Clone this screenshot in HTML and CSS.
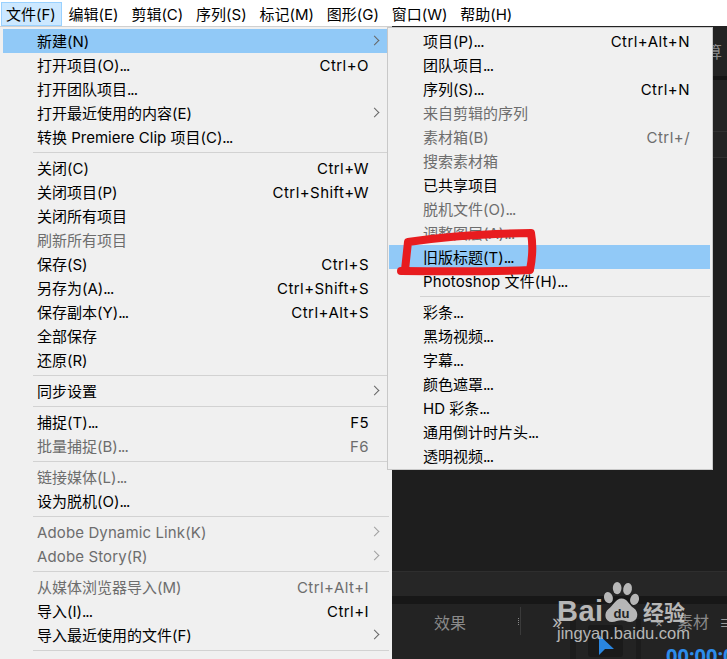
FILE: index.html
```html
<!DOCTYPE html>
<html lang="zh-CN">
<head>
<meta charset="utf-8">
<title>Premiere 文件菜单</title>
<link rel="stylesheet" href="styles.css">
</head>
<body>
<div class="menubar">
  <span class="top active">文件(F)</span>
  <span class="top">编辑(E)</span>
  <span class="top">剪辑(C)</span>
  <span class="top">序列(S)</span>
  <span class="top">标记(M)</span>
  <span class="top">图形(G)</span>
  <span class="top">窗口(W)</span>
  <span class="top">帮助(H)</span>
</div>
<div class="stage">
  <div class="menu file">
    <div class="item hot"><span>新建(N)</span><i class="arrow"></i></div>
    <div class="item"><span>打开项目(O)<span class="dots">...</span></span><kbd>Ctrl+O</kbd></div>
    <div class="item"><span>打开团队项目<span class="dots">...</span></span></div>
    <div class="item"><span>打开最近使用的内容(E)</span><i class="arrow"></i></div>
    <div class="item"><span>转换 Premiere Clip 项目(C)<span class="dots">...</span></span></div>
    <hr class="sep">
    <div class="item"><span>关闭(C)</span><kbd>Ctrl+W</kbd></div>
    <div class="item"><span>关闭项目(P)</span><kbd>Ctrl+Shift+W</kbd></div>
    <div class="item"><span>关闭所有项目</span></div>
    <div class="item off"><span>刷新所有项目</span></div>
    <div class="item"><span>保存(S)</span><kbd>Ctrl+S</kbd></div>
    <div class="item"><span>另存为(A)<span class="dots">...</span></span><kbd>Ctrl+Shift+S</kbd></div>
    <div class="item"><span>保存副本(Y)<span class="dots">...</span></span><kbd>Ctrl+Alt+S</kbd></div>
    <div class="item"><span>全部保存</span></div>
    <div class="item"><span>还原(R)</span></div>
    <hr class="sep">
    <div class="item"><span>同步设置</span><i class="arrow"></i></div>
    <hr class="sep">
    <div class="item"><span>捕捉(T)<span class="dots">...</span></span><kbd>F5</kbd></div>
    <div class="item off"><span>批量捕捉(B)<span class="dots">...</span></span><kbd>F6</kbd></div>
    <hr class="sep">
    <div class="item off"><span>链接媒体(L)<span class="dots">...</span></span></div>
    <div class="item"><span>设为脱机(O)<span class="dots">...</span></span></div>
    <hr class="sep">
    <div class="item off"><span class="wide">Adobe Dynamic Link(K)</span><i class="arrow"></i></div>
    <div class="item off"><span class="wide">Adobe Story(R)</span><i class="arrow"></i></div>
    <hr class="sep">
    <div class="item off"><span>从媒体浏览器导入(M)</span><kbd>Ctrl+Alt+I</kbd></div>
    <div class="item"><span>导入(I)<span class="dots">...</span></span><kbd>Ctrl+I</kbd></div>
    <div class="item"><span>导入最近使用的文件(F)</span><i class="arrow"></i></div>
    <hr class="sep">
  </div>
  <div class="dark">
    <div class="panel-head"><span class="cut">算</span></div>
    <div class="panel-gap"></div>
    <div class="panel-row tall"></div>
    <div class="panel-row short"></div>
    <div class="panel-body"></div>
    <div class="panel-foot"></div>
    <div class="panel-gap two"></div>
    <div class="tabs">
      <span class="tab fx">效果</span>
      <span class="grip"></span>
      <span class="more">»</span>
      <span class="tool-col">
        <span class="tool">
          <svg width="16" height="20" viewBox="0 0 16 20"><path fill="#2a86e0" d="M1 0 16 14 7 14 1 20z"/></svg>
        </span>
      </span>
      <span class="stack">
        <span class="tab-line"><span class="close">×</span><span class="tab">素材</span><span class="burger">≡</span></span>
        <span class="time">00:00:00</span>
      </span>
    </div>
  </div>

  <div class="menu sub">
    <div class="item"><span>项目(P)<span class="dots">...</span></span><kbd>Ctrl+Alt+N</kbd></div>
    <div class="item"><span>团队项目<span class="dots">...</span></span></div>
    <div class="item"><span>序列(S)<span class="dots">...</span></span><kbd>Ctrl+N</kbd></div>
    <div class="item off"><span>来自剪辑的序列</span></div>
    <div class="item off"><span>素材箱(B)</span><kbd>Ctrl+/</kbd></div>
    <div class="item off"><span>搜索素材箱</span></div>
    <div class="item"><span>已共享项目</span></div>
    <div class="item off"><span>脱机文件(O)<span class="dots">...</span></span></div>
    <div class="item off"><span>调整图层(A)<span class="dots">...</span></span></div>
    <div class="item hot"><span>旧版标题(T)<span class="dots">...</span></span></div>
    <div class="item"><span class="wide">Photoshop 文件(H)<span class="dots">...</span></span></div>
    <hr class="sep">
    <div class="item"><span>彩条<span class="dots">...</span></span></div>
    <div class="item"><span>黑场视频<span class="dots">...</span></span></div>
    <div class="item"><span>字幕<span class="dots">...</span></span></div>
    <div class="item"><span>颜色遮罩<span class="dots">...</span></span></div>
    <div class="item"><span>HD 彩条<span class="dots">...</span></span></div>
    <div class="item"><span>通用倒计时片头<span class="dots">...</span></span></div>
    <div class="item"><span>透明视频<span class="dots">...</span></span></div>
  </div>

  <svg class="scribble" width="150" height="60" viewBox="395 220 150 60">
    <path d="M401 271Q480 272 530 270Q534 250 531 233Q460 234 408 242L405 270"/>
  </svg>

  <div class="watermark">
    <div class="logo">
      <span class="bai">Bai</span>
      <svg class="paw" width="39" height="40" viewBox="0 0 40 46">
        <ellipse cx="5" cy="18" rx="5" ry="6.500" transform="rotate(-20 5 18)"/>
        <ellipse cx="15" cy="7" rx="5" ry="7"/>
        <ellipse cx="27" cy="8" rx="5" ry="7" transform="rotate(10 27 8)"/>
        <ellipse cx="35" cy="20" rx="5" ry="6.500" transform="rotate(20 35 20)"/>
        <path d="M20 19C27 19 28 26 34 30C41 35 39 46 30 46C26 46 24 44 20 44C16 44 13 46 9 46C1 46-1 36 5 31C11 27 13 19 20 19Z"/>
        <text x="20" y="41" text-anchor="middle">du</text>
      </svg>
      <span class="jy">经验</span>
    </div>
    <div class="url">jingyan.baidu.com</div>
  </div>
</div>
</body>
</html>
```
FILE: styles.css
```css
* { box-sizing: border-box; }
html, body { margin: 0; height: 100%; }
body {
  width: 727px;
  height: 659px;
  overflow: hidden;
  background: #fff;
  font-family: Inter, "Noto Sans CJK SC", sans-serif;
  font-size: 15px;
  color: #000;
}
.menubar {
  display: flex;
  height: 26px;
  padding: 2px 0 0 1px;
  background: #fff;
}
.top {
  height: 24px;
  padding: 0 5px 0 4px;
  line-height: 24px;
  margin-right: 1.800px;
  border: 1px solid transparent;
  white-space: nowrap;
}
.top.active { background: #cce8ff; border-color: #99d1ff; }

.stage {
  position: relative;
  display: flex;
  height: 633px;
  overflow: hidden;
}
.menu { background: #f0f0f0; }
.file {
  flex: 0 0 392px;
  padding: 2px 3px 0;
  border-top: 1px solid #d0d0d0;
}
.item {
  display: flex;
  justify-content: space-between;
  align-items: flex-start;
  position: relative;
  height: 24px;
  padding: 0 20px 0 34px;
  white-space: nowrap;
}
.item span, .item kbd { font: inherit; line-height: 26px; }
.item kbd { letter-spacing: .45px; }
.item .dots { letter-spacing: -1px; }
.item .wide { letter-spacing: .12px; }
.hot { background: #91c9f7; }
.off { color: #6d6d6d; }
.arrow {
  position: absolute;
  right: 11px;
  top: 8px;
  width: 7px;
  height: 7px;
  border-top: 1px solid #666;
  border-right: 1px solid #666;
  transform: rotate(45deg);
}
.off .arrow { border-color: #a0a0a0; }
.sep {
  height: 1px;
  margin: 3px 0 3px 30px;
  border: 0;
  background: #d2d2d2;
}

.dark {
  flex: 1;
  display: flex;
  flex-direction: column;
  min-width: 0;
  background: #1e1e1e;
}
.panel-head { height: 50px; background: #232323; padding: 17px 0 0 314px; }
.cut { color: #8a8a8a; font-size: 16px; line-height: 18px; display: block; }
.panel-gap { height: 4px; background: #151515; }
.panel-row { background: #232323; border-bottom: 1px solid #303030; }
.panel-row.tall { height: 52px; }
.panel-row.short { height: 26px; }
.panel-body { height: 414px; background: #1e1e1e; border-bottom: 1px solid #2e2e2e; }
.panel-foot { height: 24px; background: #262626; }
.panel-gap.two { height: 8px; background: #171717; }
.tabs {
  flex: 1;
  display: flex;
  background: #232323;
  color: #8a8a8a;
  font-size: 16px;
  overflow: hidden;
  white-space: nowrap;
}
.tab { line-height: 20px; flex: none; }
.fx { margin: 9px 0 0 42px; height: 20px; }
.grip { position: relative; flex: none; width: 1px; height: 28px; margin: 3px 0 0 54px; background: #3a3a3a; }
.grip::before {
  content: "";
  position: absolute;
  left: -2px;
  top: 11px;
  width: 1px;
  height: 7px;
  border-left: 1px dotted #8a8a8a;
}
.more { flex: none; margin: 6px 0 0 31px; font-size: 18px; line-height: 24px; color: #b5b5b5; width: 18px; }
.tool-col {
  flex: none;
  width: 71px;
  height: 60px;
  margin: 15px 0 0 0;
  padding: 6px 13px 0 12px;
  border-left: 6px solid #1c1c1c;
  border-right: 5px solid #1c1c1c;
}
.tool {
  display: flex;
  justify-content: center;
  padding-top: 10px;
  height: 32px;
  background: #1a1a1a;
  border-radius: 3px;
}
.stack { flex: none; display: flex; flex-direction: column; margin-left: 14px; }
.tab-line { display: flex; align-items: center; height: 26px; margin-top: 6px; }
.close { font-size: 12px; margin-right: 14px; color: #9a9a9a; }
.burger { margin-left: 10px; color: #9a9a9a; }
.time {
  color: #2d8ceb;
  font-family: "Noto Sans", sans-serif;
  font-size: 20px;
  font-weight: 700;
  line-height: 24px;
  margin: 10px 0 0 11px;
}

.sub {
  position: absolute;
  left: 387px;
  top: 1px;
  width: 326px;
  padding: 1px 2px 1px 1px;
  border: 1px solid #c8c8c8;
}
.sub .item { padding: 0 20px 0 34px; }
.sub .sep { margin: 3px 0 3px 31px; }

.scribble {
  position: absolute;
  left: 395px;
  top: 194px;
}
.scribble path {
  fill: none;
  stroke: #e81c1f;
  stroke-width: 8;
  stroke-linecap: round;
  stroke-linejoin: round;
}

.watermark {
  position: absolute;
  left: 557px;
  top: 557px;
  width: 140px;
  color: #c4c4c4;
  opacity: .92;
  font-family: "Liberation Sans", sans-serif;
}
.logo { display: flex; align-items: flex-end; height: 39px; }
.bai { font-size: 29px; font-weight: 700; line-height: 33px; margin-bottom: -6px; letter-spacing: .5px; width: 45px; }
.paw { flex: none; margin-left: 0; fill: #c4c4c4; }
.paw text { fill: #232323; font: 700 15px "Liberation Sans", sans-serif; }
.jy { font-family: "Noto Sans CJK SC", sans-serif; font-size: 21px; font-weight: 700; line-height: 31px; margin: 0 0 -5px 2px; white-space: nowrap; }
.url { font-size: 16.500px; line-height: 20px; margin-top: 1px; white-space: nowrap; }
```
